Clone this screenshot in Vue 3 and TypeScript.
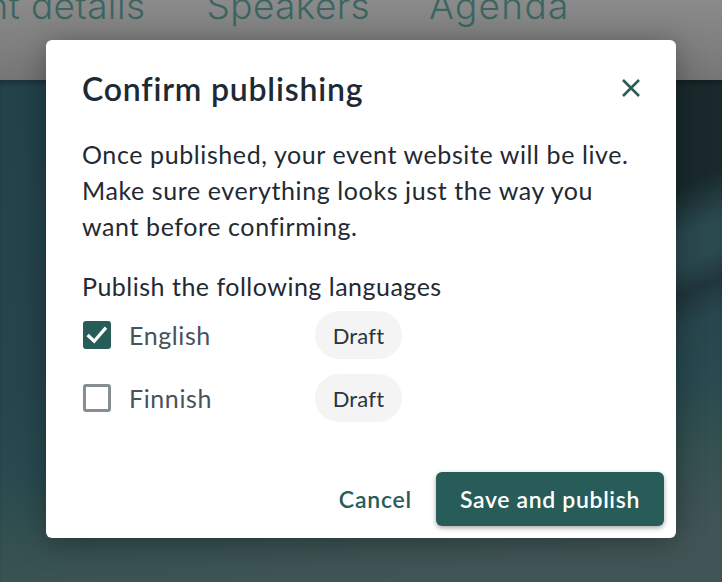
<script setup lang="ts">
const languages = [
  { name: 'English', checked: true, status: 'Draft' },
  { name: 'Finnish', checked: false, status: 'Draft' },
]
</script>

<template>
  <div class="page">
    <header class="topbar">
      <nav class="tabs">
        <span class="tab first">Event details</span>
        <span class="tab">Speakers</span>
        <span class="tab agenda">Agenda</span>
      </nav>
    </header>
    <main class="hero"></main>
    <div class="overlay">
      <section class="modal">
        <div class="modal-head">
          <h2 class="title">Confirm publishing</h2>
          <button class="close" aria-label="Close">
            <svg width="20" height="20" viewBox="0 0 20 20" fill="none">
              <path d="M2 2 L18 18 M18 2 L2 18" stroke="#285c58" stroke-width="2.6" />
            </svg>
          </button>
        </div>
        <p class="body">Once published, your event website will be live. Make sure everything looks just the way you want before confirming.</p>
        <p class="label">Publish the following languages</p>
        <div class="langs">
          <div v-for="l in languages" :key="l.name" class="lang">
            <span class="check" :class="{ on: l.checked }">
              <svg v-if="l.checked" width="28" height="28" viewBox="0 0 28 28" fill="none">
                <path d="M4.6 14 L11.2 20.2 L23 6.6" stroke="#fff" stroke-width="3.2" />
              </svg>
            </span>
            <span class="lang-name">{{ l.name }}</span>
            <span class="chip">{{ l.status }}</span>
          </div>
        </div>
        <div class="actions">
          <button class="cancel">Cancel</button>
          <button class="save">Save and publish</button>
        </div>
      </section>
    </div>
  </div>
</template>

<style>
html, body { margin: 0; background: #3c4f50; }
</style>

<style scoped>
.page {
  position: relative;
  width: 722px;
  height: 582px;
  overflow: hidden;
  display: flex;
  flex-direction: column;
  font-family: Lato, "Noto Sans", sans-serif;
}
.topbar {
  height: 80px;
  flex: none;
  background: linear-gradient(#8a8a8a, #7f7f7f 60%, #757575);
  overflow: hidden;
  display: flex;
  align-items: flex-end;
}
.tabs {
  display: flex;
  gap: 61px;
  margin-left: -78px;
  padding-bottom: 49px;
  font-family: Inter, sans-serif;
  font-weight: 300;
  font-size: 37px;
  letter-spacing: 0.4px;
  line-height: 50px;
  color: #3c6561;
  white-space: nowrap;
}
.agenda {
  letter-spacing: 1.3px;
  margin-left: -2px;
}
.hero {
  flex: 1;
  box-shadow: inset 0 5px 5px -2px rgba(0, 0, 0, .25);
  background:
    linear-gradient(156.5deg,
      #19292c 0, #19292c 100px, #2a4a50 145px, #2a4a50 172px,
      #21363c 199px, #27454c 228px, rgba(39,69,76,0) 240px) right top / 46px 100% no-repeat,
    linear-gradient(172deg,
      #23424a 0%, #26454c 50%, #284a50 66%, #33504f 76%, #425556 92%, #425556 100%);
}
.overlay {
  position: absolute;
  inset: 0;
}
.modal {
  position: absolute;
  left: 46px;
  top: 40px;
  width: 630px;
  height: 498px;
  box-sizing: border-box;
  padding: 28px 12px 12px 36px;
  background: #fff;
  border-radius: 6px;
  box-shadow: 0 4px 30px rgba(0,0,0,.34);
  display: flex;
  flex-direction: column;
  color: #1f2a33;
}
.modal-head {
  display: flex;
  justify-content: space-between;
  align-items: center;
  height: 42px;
}
.title {
  margin: 0;
  font-size: 32px;
  font-weight: 600;
  line-height: 42px;
  letter-spacing: 0.8px;
  color: #1d2a35;
}
.close {
  border: 0;
  background: none;
  padding: 0;
  width: 20px;
  height: 20px;
  margin-right: 23px;
  margin-top: -2px;
}
.body {
  margin: 26px 24px 0 0;
  font-size: 25px;
  line-height: 36px;
  letter-spacing: 0.6px;
  color: #1f2a33;
}
.label {
  margin: 24px 0 0;
  font-size: 25px;
  line-height: 36px;
  letter-spacing: 0.5px;
  color: #1f2a33;
}
.langs {
  display: flex;
  flex-direction: column;
  gap: 15px;
  margin-top: 7px;
}
.lang {
  display: flex;
  align-items: center;
  height: 48px;
}
.check {
  width: 28px;
  height: 28px;
  box-sizing: border-box;
  border: 3px solid #868e92;
  border-radius: 3px;
  margin-left: 1px;
  display: flex;
  align-items: center;
  justify-content: center;
  position: relative;
}
.check svg {
  position: absolute;
  left: -3px;
  top: -3px;
}
.check.on {
  background: #285c58;
  border-color: #285c58;
}
.lang-name {
  margin-left: 18px;
  width: 186px;
  font-size: 25px;
  letter-spacing: 0.6px;
  color: #47525b;
}
.chip {
  width: 87px;
  height: 48px;
  border-radius: 24px;
  background: #f4f4f4;
  display: flex;
  align-items: center;
  justify-content: center;
  font-size: 22px;
  letter-spacing: 0.2px;
  color: #2b353d;
}
.actions {
  margin-top: auto;
  display: flex;
  align-items: center;
  justify-content: flex-end;
  gap: 24px;
}
.cancel {
  border: 0;
  background: none;
  padding: 0;
  font: 600 23px Lato, sans-serif;
  letter-spacing: 0.8px;
  color: #285c58;
}
.save {
  width: 228px;
  height: 54px;
  border: 0;
  border-radius: 6px;
  background: #285c58;
  color: #fff;
  font: 600 23px Lato, sans-serif;
  letter-spacing: 0.65px;
  box-shadow: 0 2px 5px rgba(0,0,0,.35);
}
</style>
